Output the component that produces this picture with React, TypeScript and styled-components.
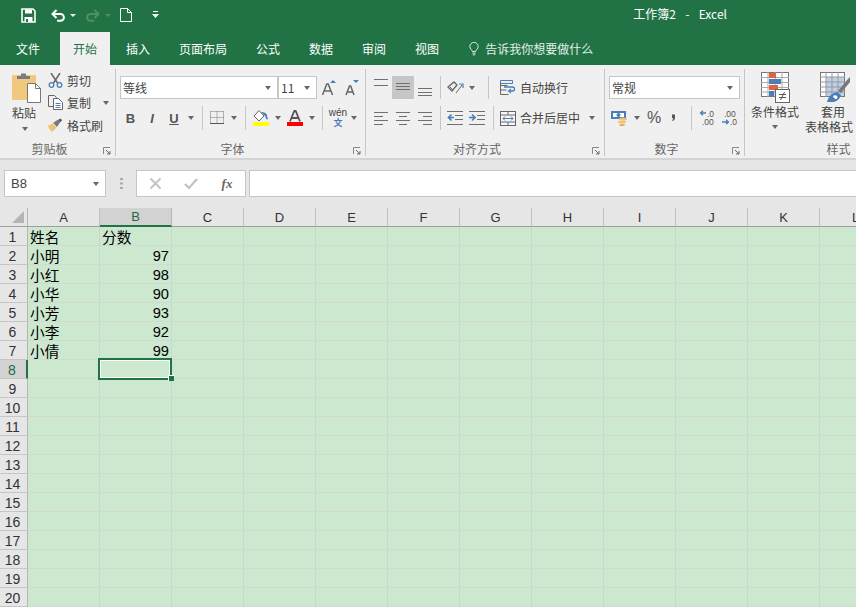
import React from 'react';
import styled, { createGlobalStyle } from 'styled-components';

const GREEN = '#217346';
const BLUE = '#4a7ebb';

const GlobalStyle = createGlobalStyle`
  html, body { margin: 0; padding: 0; background: #cce8cf; }
  body {
    width: 856px;
    height: 607px;
    overflow: hidden;
    font-family: "Noto Sans CJK SC", "Liberation Sans", sans-serif;
  }
`;

const Page = styled.div`
  width: 856px;
  height: 607px;
  display: flex;
  flex-direction: column;
  overflow: hidden;
`;

/* title bar */
const TitleBar = styled.div`
  height: 32px;
  background: ${GREEN};
  display: flex;
  align-items: center;
  color: #fff;
  flex: none;
`;
const Qat = styled.div`
  display: flex;
  align-items: center;
  padding: 0 0 2px 20px;
  height: 32px;
  box-sizing: border-box;
`;
const QatSlot = styled.div<{ $w: number }>`
  width: ${(p) => p.$w}px;
  display: flex;
  align-items: center;
  justify-content: center;
`;
const QatCaret = styled.span<{ $dim?: boolean }>`
  display: block;
  border-left: 3px solid transparent;
  border-right: 3px solid transparent;
  border-top: 3px solid ${(p) => (p.$dim ? '#4f9068' : '#e8f0ea')};
`;
const Title = styled.div`
  margin-left: auto;
  padding: 0 129px 6px 0;
  font-size: 12px;
  white-space: pre;
  word-spacing: 2px;
`;

/* tabs */
const TabBar = styled.div`
  height: 33px;
  background: ${GREEN};
  display: flex;
  padding-left: 3px;
  gap: 3px;
  flex: none;
`;
const Tab = styled.div<{ $active?: boolean; $first?: boolean }>`
  padding: 0 13px;
  display: flex;
  align-items: center;
  font-size: 12px;
  margin-right: ${(p) => (p.$first ? '4px' : '0')};
  color: ${(p) => (p.$active ? GREEN : '#fff')};
  background: ${(p) => (p.$active ? '#f0f0f0' : 'transparent')};
`;
const TellMe = styled.div`
  display: flex;
  align-items: center;
  margin-left: 14px;
  gap: 6px;
  color: #e4efe8;
  font-size: 12px;
`;

/* ribbon */
const Ribbon = styled.div`
  height: 95px;
  box-sizing: border-box;
  background: #f0f0f0;
  border-bottom: 2px solid #d4d4d4;
  display: flex;
  overflow: hidden;
  flex: none;
  color: #444;
  font-size: 12px;
`;
const Group = styled.section<{ $w: number }>`
  width: ${(p) => p.$w}px;
  flex: none;
  box-sizing: border-box;
  margin: 4px 0 2px;
  padding-top: 7px;
  border-right: 1px solid #c6c6c6;
  display: flex;
  flex-direction: column;
`;
const GroupBody = styled.div`
  flex: 1;
  display: flex;
  min-height: 0;
`;
const Stack = styled.div`
  display: flex;
  flex-direction: column;
  gap: 7px;
  padding-left: 4px;
`;
const GroupLabel = styled.div`
  height: 15px;
  display: flex;
  align-items: center;
  color: #666;
  font-size: 12px;
  line-height: 15px;
  span { flex: 1; text-align: center; }
`;
const Launcher = styled.div`
  width: 16px;
  padding-top: 4px;
  display: flex;
  align-items: center;
  justify-content: center;
`;
const Row = styled.div<{ $h?: number }>`
  display: flex;
  align-items: center;
  height: ${(p) => p.$h ?? 23}px;
`;
const Slot = styled.div<{ $w: number; $on?: boolean }>`
  width: ${(p) => p.$w}px;
  height: 100%;
  flex: none;
  display: flex;
  align-items: center;
  justify-content: center;
  background: ${(p) => (p.$on ? '#c6c6c6' : 'transparent')};
`;
const Sep = styled.div<{ $w: number }>`
  width: ${(p) => p.$w}px;
  height: 100%;
  flex: none;
  display: flex;
  justify-content: center;
  &::after {
    content: '';
    width: 1px;
    background: #c6c6c6;
    height: 100%;
  }
`;
const Caret = styled.span`
  display: block;
  border-left: 3.5px solid transparent;
  border-right: 3.5px solid transparent;
  border-top: 4px solid #666;
`;
const Select = styled.div<{ $w: number }>`
  width: ${(p) => p.$w}px;
  height: 23px;
  box-sizing: border-box;
  background: #fff;
  border: 1px solid #c6c6c6;
  display: flex;
  align-items: center;
  justify-content: space-between;
  padding: 0 6px 0 2px;
  font-size: 12px;
  color: #444;
  flex: none;
`;
const RowText = styled.span`
  margin-left: 2px;
  white-space: nowrap;
  line-height: 1;
`;
const Clipboard = styled.div`
  display: flex;
  padding-left: 12px;
`;
const PasteBtn = styled.div`
  width: 29px;
  display: flex;
  flex-direction: column;
  align-items: flex-start;
  margin-top: -4px;
  span { margin-top: 2px; line-height: 16px; }
  i { display: block; margin: 4px 0 0 10px; }
`;
const ClipRows = styled.div`
  margin: -7px 0 0 7px;
  display: flex;
  flex-direction: column;
  gap: 0.5px;
`;
const ClipRow = styled.div`
  height: 22px;
  display: flex;
  align-items: center;
  gap: 4px;
  white-space: nowrap;
`;
const ClipIcon = styled.div`
  width: 15px;
  display: flex;
  justify-content: center;
`;
const BigBtn = styled.div<{ $w: number }>`
  width: ${(p) => p.$w}px;
  flex: none;
  display: flex;
  flex-direction: column;
  align-items: center;
  margin-top: -4px;
  line-height: 15px;
  white-space: nowrap;
  svg { margin-bottom: 1px; }
  i { display: block; margin-top: 6px; }
`;
const TableBtn = styled(BigBtn)`
  align-items: flex-start;
  svg { margin-left: 15px; margin-bottom: 1px; }
  span:first-of-type { margin-left: 16px; }
`;

/* formula bar */
const FormulaBar = styled.div`
  height: 48px;
  flex: none;
  box-sizing: border-box;
  background: #e6e6e6;
  padding: 10px 0 11px 4px;
  display: flex;
  align-items: stretch;
`;
const WhiteBox = styled.div`
  background: #fff;
  border: 1px solid #c6c6c6;
  box-sizing: border-box;
  display: flex;
  align-items: center;
`;
const NameBox = styled(WhiteBox)`
  width: 102px;
  padding: 0 6px;
  justify-content: space-between;
  font: 13px "Liberation Sans", sans-serif;
  color: #444;
`;
const Dots = styled.div`
  width: 30px;
  display: flex;
  align-items: center;
  justify-content: center;
`;
const FuncBox = styled(WhiteBox)`
  width: 110px;
`;
const FuncSlot = styled.div`
  width: 36px;
  display: flex;
  justify-content: center;
  align-items: center;
`;
const Fx = styled.span`
  font: italic bold 13px "Liberation Serif", serif;
  color: #666;
`;
const FormulaInput = styled(WhiteBox)`
  margin-left: 3px;
  flex: 1;
  border-right: none;
`;

/* sheet */
const Sheet = styled.div`
  flex: 1;
  display: flex;
  flex-direction: column;
  min-height: 0;
  background: #cce8cf;
`;
const HeaderRow = styled.div`
  height: 19px;
  flex: none;
  display: flex;
  background: #e6e6e6;
`;
const Corner = styled.div`
  width: 28px;
  box-sizing: border-box;
  flex: none;
  border-right: 1px solid #b5b5b5;
  border-bottom: 1px solid #9e9e9e;
  display: flex;
  align-items: flex-end;
  justify-content: flex-end;
  padding: 0 3px 3px 0;
`;
const ColHead = styled.div<{ $sel?: boolean }>`
  width: 72px;
  flex: none;
  box-sizing: border-box;
  display: flex;
  align-items: center;
  justify-content: center;
  font: 13px "Liberation Sans", sans-serif;
  color: ${(p) => (p.$sel ? '#1c6a3f' : '#333')};
  background: ${(p) => (p.$sel ? '#d2d2d2' : 'transparent')};
  border-right: 1px solid ${(p) => (p.$sel ? '#b5b5b5' : '#c2c2c2')};
  border-bottom: ${(p) => (p.$sel ? `2px solid ${GREEN}` : '1px solid #9e9e9e')};
`;
const SheetRow = styled.div`
  height: 19px;
  flex: none;
  display: flex;
`;
const RowHead = styled.div<{ $sel?: boolean }>`
  width: 28px;
  flex: none;
  box-sizing: border-box;
  display: flex;
  align-items: center;
  justify-content: center;
  padding: 1px 2px 0 0;
  font: 14px "Liberation Sans", sans-serif;
  color: ${(p) => (p.$sel ? '#1c6a3f' : '#333')};
  background: ${(p) => (p.$sel ? '#d2d2d2' : '#e6e6e6')};
  border-right: ${(p) => (p.$sel ? `2px solid ${GREEN}` : '1px solid #b5b5b5')};
  border-bottom: 1px solid #c6c6c6;
`;
const Cell = styled.div<{ $num?: boolean }>`
  width: 72px;
  flex: none;
  box-sizing: border-box;
  position: relative;
  padding: ${(p) => (p.$num ? '2px 2px 0' : '0 2px')};
  display: flex;
  align-items: center;
  justify-content: ${(p) => (p.$num ? 'flex-end' : 'flex-start')};
  font: 14.67px "Liberation Sans", "Noto Sans CJK SC", sans-serif;
  color: #000;
  border-right: 1px solid #c6dac9;
  border-bottom: 1px solid #d2d8d2;
`;
const Selection = styled.div`
  position: absolute;
  left: -2px;
  top: -2px;
  width: 74px;
  height: 22px;
  box-sizing: border-box;
  border: 2px solid ${GREEN};
  outline: 1px solid #fff;
  outline-offset: -3px;
  z-index: 2;
`;
const FillHandle = styled.div`
  position: absolute;
  right: -4px;
  bottom: -3px;
  width: 5px;
  height: 5px;
  background: ${GREEN};
  border-left: 1px solid #fff;
  border-top: 1px solid #fff;
`;

/* icons */
const SaveIcon = () => (
  <svg width="15" height="15" viewBox="0 0 15 15">
    <path d="M1 1h11l2 2v11H1z" fill="none" stroke="#fff" strokeWidth="1.6" />
    <path d="M4 1.500h7v4H4zM3.500 9h8v5h-8z" fill="#fff" />
    <path d="M5 11h2v3H5z" fill={GREEN} />
  </svg>
);
const UndoIcon = ({ color }: { color: string }) => (
  <svg width="15" height="13" viewBox="0 0 15 13">
    <path d="M2 5h7.500a3.300 3.300 0 0 1 0 6.800H6" fill="none" stroke={color} strokeWidth="2" />
    <path d="M5.500 1 1.500 5l4 4" fill="none" stroke={color} strokeWidth="2" />
  </svg>
);
const RedoIcon = ({ color }: { color: string }) => (
  <svg width="15" height="13" viewBox="0 0 15 13">
    <path d="M13 5H5.500a3.300 3.300 0 0 0 0 6.800H9" fill="none" stroke={color} strokeWidth="2" />
    <path d="M9.500 1l4 4-4 4" fill="none" stroke={color} strokeWidth="2" />
  </svg>
);
const NewDocIcon = () => (
  <svg width="12" height="14" viewBox="0 0 12 14">
    <path d="M.5.500h7l4 4v9H.5z" fill={GREEN} stroke="#fff" />
    <path d="M7.500.5v4h4" fill="none" stroke="#fff" />
  </svg>
);
const CustomizeIcon = () => (
  <svg width="7" height="8" viewBox="0 0 7 8">
    <path d="M1 0h5v1H1z" fill="#fff" />
    <path d="M0 3h7L3.500 7z" fill="#fff" />
  </svg>
);
const BulbIcon = () => (
  <svg width="10" height="14" viewBox="0 0 12 16">
    <path d="M4 11c0-2-3-3-3-6a5 5 0 0 1 10 0c0 3-3 4-3 6z" fill="none" stroke="#fff" />
    <path d="M4 13h4M4.500 15h3" stroke="#fff" />
  </svg>
);
const PasteIcon = () => (
  <svg width="29" height="31" viewBox="0 0 29 31">
    <rect x="0" y="3" width="24" height="25" rx="1" fill="#f0c87e" />
    <path d="M5 7V4h4V1.500h5V4h4v3z" fill="#7b7b7b" />
    <path d="M15.500 11.500h8l5 5v14h-13z" fill="#fff" stroke="#777" />
    <path d="M23.500 11.500v5h5" fill="none" stroke="#777" />
  </svg>
);
const ScissorsIcon = () => (
  <svg width="15" height="15" viewBox="0 0 15 15">
    <path d="M3 0l6.500 10M12 0 5.500 10" stroke="#666" strokeWidth="1.500" fill="none" />
    <circle cx="3.500" cy="12" r="2.300" fill="none" stroke={BLUE} strokeWidth="1.300" />
    <circle cx="11.500" cy="12" r="2.300" fill="none" stroke={BLUE} strokeWidth="1.300" />
  </svg>
);
const CopyIcon = () => (
  <svg width="15" height="15" viewBox="0 0 15 15">
    <path d="M.5.500h6l2 2v9h-8z" fill="#f0f0f0" stroke="#666" />
    <path d="M5.500 3.500h5l4 4v7h-9z" fill="#fff" stroke="#666" />
    <path d="M7.500 8.500h5M7.500 10.500h5M7.500 12.500h5" stroke={BLUE} />
  </svg>
);
const BrushIcon = () => (
  <svg width="16" height="14" viewBox="0 0 16 14">
    <path d="M0 8l5-3 4 5-4 4C3 14 1 11 0 8z" fill="#efc27a" />
    <path d="M5.500 4.500 11 1l2 3-3.500 5z" fill="#777" />
    <path d="M11 1.500 13.500 0 15 2l-2 2z" fill="#555" />
  </svg>
);
const LauncherIcon = () => (
  <svg width="8" height="8" viewBox="0 0 8 8">
    <path d="M.5 7V.5H7" fill="none" stroke="#888" />
    <path d="M3 3l4 4M7 4v3H4" fill="none" stroke="#666" />
  </svg>
);
const GrowIcon = ({ up }: { up: boolean }) => (
  <svg width="14" height="16" viewBox="0 0 14 16">
    <path
      d={up ? 'M.5 15 4.800 4h1.400L10.500 15M2.500 11h6' : 'M1 15 4.500 6h1.200L9 15M2.500 12h5'}
      fill="none"
      stroke="#666"
      strokeWidth="1.500"
    />
    <path d={up ? 'M8 3h6l-3-3z' : 'M8 0h6l-3 3z'} fill={BLUE} />
  </svg>
);
const LetterIcon = styled.span<{ $kind: 'b' | 'i' | 'u' }>`
  font: ${(p) => (p.$kind === 'i' ? 'italic bold' : 'bold')} 13px "Liberation Sans", sans-serif;
  color: #555;
  text-decoration: ${(p) => (p.$kind === 'u' ? 'underline' : 'none')};
`;
const BorderIcon = () => (
  <svg width="14" height="14" viewBox="0 0 14 14">
    <path
      d="M.5.500h13M.5 6.500h13M.5 .5v11M7 .5v11M13.500 .5v11"
      stroke="#777"
      strokeDasharray="1 1"
      fill="none"
    />
    <path d="M0 12.500h14" stroke="#555" />
  </svg>
);
const FillIcon = () => (
  <svg width="16" height="16" viewBox="0 0 16 16">
    <path d="M6 .5 1 6l5 5 5-5z" fill="#fff" stroke="#666" />
    <path d="M8 2c3 0 6 1 6 4l1 3c-1 1-2 0-2-1l-1-2z" fill={BLUE} />
    <rect x="0" y="12" width="16" height="4" fill="#ffff00" />
  </svg>
);
const FontColorIcon = () => (
  <svg width="16" height="16" viewBox="0 0 16 16">
    <path d="M3 11.500 7.300 1h1.400L13 11.500M5 8h6" fill="none" stroke="#555" strokeWidth="1.800" />
    <rect x="0" y="12" width="16" height="4" fill="#ff0000" />
  </svg>
);
const Wen = styled.div`
  display: flex;
  flex-direction: column;
  align-items: center;
  font: 10px/10px "Liberation Sans", sans-serif;
  color: #444;
  b { font: bold 9px/10px "Noto Sans CJK SC", sans-serif; color: ${BLUE}; }
`;
const Lines = ({ ys, x = [[0, 14]] }: { ys: number[]; x?: number[][] }) => (
  <svg width="14" height="23" viewBox="0 0 14 23">
    {ys.map((y, i) => {
      const [a, b] = x[i % x.length];
      return <path key={y} d={`M${a} ${y + 0.5}H${b}`} stroke="#6f6f6f" />;
    })}
  </svg>
);
const OrientIcon = () => (
  <svg width="17" height="15" viewBox="0 0 17 15">
    <path d="M1 7l6-5 3 3-5 6z" fill="none" stroke="#666" strokeWidth="1.300" />
    <path d="M3 7l3 3" stroke="#666" />
    <path d="M9 13l6-8" stroke="#666" />
    <path d="M12 4h4v4" fill="none" stroke={BLUE} strokeWidth="1.200" />
  </svg>
);
const IndentIcon = ({ out }: { out: boolean }) => (
  <svg width="16" height="14" viewBox="0 0 16 14">
    <path d="M0 .5h16M8 4.500h8M8 8.500h8M0 13.500h16" stroke="#6f6f6f" />
    <path
      d={out ? 'M7 6.500H2M4.500 3.500l-3 3 3 3' : 'M0 6.500h5M3 3.500l3 3-3 3'}
      fill="none"
      stroke={BLUE}
      strokeWidth="1.700"
    />
  </svg>
);
const WrapIcon = () => (
  <svg width="16" height="15" viewBox="0 0 16 15">
    <path d="M.5 3v11.500h8M.5 5.500h7M.5 10h6" fill="none" stroke="#666" />
    <path d="M.5.500h12v3h-12z" fill="none" stroke={BLUE} />
    <path d="M4 7h8.500a2 2 0 0 1 0 4H9" fill="none" stroke={BLUE} strokeWidth="1.300" />
    <path d="M11 9l-2.500 2 2.500 2" fill="none" stroke={BLUE} strokeWidth="1.200" />
  </svg>
);
const MergeIcon = () => (
  <svg width="16" height="15" viewBox="0 0 16 15">
    <rect x=".5" y=".5" width="15" height="14" fill="#f8f8f8" stroke="#666" />
    <path d="M0 4h16M0 11h16M8 0v4M8 11v4" stroke="#666" />
    <path d="M3 7.500h10M5 5.500l-2 2 2 2M11 5.500l2 2-2 2" fill="none" stroke={BLUE} />
  </svg>
);
const MoneyIcon = () => (
  <svg width="18" height="16" viewBox="0 0 18 16">
    <rect x="0" y="1" width="15" height="8" fill={BLUE} />
    <rect x="2" y="3" width="11" height="4" fill="#fff" />
    <circle cx="7.500" cy="5" r="2" fill={BLUE} />
    <ellipse cx="12" cy="9" rx="4" ry="1.500" fill="#efc27a" />
    <ellipse cx="11" cy="12" rx="4" ry="1.500" fill="#efc27a" />
    <ellipse cx="11" cy="15" rx="3" ry="1" fill="#e3a74f" />
  </svg>
);
const Percent = styled.span`
  font: 16px "Liberation Sans", sans-serif;
  color: #555;
`;
const CommaIcon = () => (
  <svg width="18" height="10" viewBox="0 0 18 10">
    <path d="M7 1.500h3v3c0 2-1 3-2.500 3.500L7 7c1 0 1-1 1-2H7z" fill="#555" />
  </svg>
);
const DecimalText = styled.text`
  font: 8.500px "Liberation Sans", sans-serif;
  fill: #555;
`;
const DecimalIcon = ({ inc }: { inc: boolean }) => (
  <svg width="17" height="16" viewBox="0 0 17 16">
    {inc ? (
      <>
        <DecimalText x="8" y="6.500">.0</DecimalText>
        <DecimalText x="3" y="15">.00</DecimalText>
        <path d="M7 3H1.500M4 .8 1.500 3 4 5.200" fill="none" stroke={BLUE} strokeWidth="1.300" />
      </>
    ) : (
      <>
        <DecimalText x="3" y="6.500">.00</DecimalText>
        <DecimalText x="9" y="15">.0</DecimalText>
        <path d="M1 12h6M5 9.800 7.500 12 5 14.200" fill="none" stroke={BLUE} strokeWidth="1.300" />
      </>
    )}
  </svg>
);
const CondFormatIcon = () => (
  <svg width="29" height="31" viewBox="0 0 29 31">
    <rect x=".5" y=".5" width="27" height="24" fill="#fff" stroke="#777" />
    <path d="M7 0v25M14 0v25M21 0v25M0 5.500h28M0 10.500h28M0 15.500h28M0 20h28" stroke="#aaa" />
    <rect x="8" y="1" width="7" height="5" fill="#e1653c" />
    <rect x="8" y="7" width="12" height="5" fill={BLUE} />
    <rect x="8" y="13" width="9" height="5" fill="#e1653c" />
    <rect x="8" y="19" width="5" height="5" fill={BLUE} />
    <rect x="14.500" y="17.500" width="14" height="13" fill="#fff" stroke="#666" />
    <path d="M18 22.500h7M18 25.500h7M19.500 28l4-8" stroke="#555" />
  </svg>
);
const TableStyleIcon = () => (
  <svg width="30" height="31" viewBox="0 0 30 31">
    <rect x=".5" y=".5" width="24" height="24" fill="#fff" stroke="#777" />
    <rect x="6" y="5" width="18" height="19" fill="#bcd0e6" />
    <path d="M6 0v25M12 0v25M18 0v25M0 5h25M0 10h25M0 15h25M0 20h25" stroke="#999" />
    <path d="M18 19l9-11 3-3v5l-9 11z" fill="#777" />
    <path d="M7 30c1-5 5-9 10-10l4 3c-1 4-5 7-8 7z" fill={BLUE} />
    <path d="M13 24c1-1 3-1 4 0s0 3-1 3-3-2-3-3z" fill="#fff" />
  </svg>
);
const CornerTriangle = () => (
  <svg width="12" height="12" viewBox="0 0 12 12">
    <path d="M12 0v12H0z" fill="#b4b4b4" />
  </svg>
);
const DotsIcon = () => (
  <svg width="3" height="11" viewBox="0 0 3 11">
    <path d="M0 0h3v2H0zM0 4.500h3v2H0zM0 9h3v2H0z" fill="#aaa" />
  </svg>
);
const CrossIcon = () => (
  <svg width="13" height="13" viewBox="0 0 13 13">
    <path d="M1.500 1.500l10 10M11.500 1.500l-10 10" stroke="#c2c2c2" strokeWidth="1.800" />
  </svg>
);
const CheckIcon = () => (
  <svg width="14" height="12" viewBox="0 0 14 12">
    <path d="M1 6l4 4 8-9" fill="none" stroke="#c2c2c2" strokeWidth="2.200" />
  </svg>
);

const tabs = ['插入', '页面布局', '公式', '数据', '审阅', '视图'];
const columns = ['A', 'B', 'C', 'D', 'E', 'F', 'G', 'H', 'I', 'J', 'K', 'L'];
const scores: [string, string][] = [
  ['姓名', '分数'],
  ['小明', '97'],
  ['小红', '98'],
  ['小华', '90'],
  ['小芳', '93'],
  ['小李', '92'],
  ['小倩', '99'],
];
const rowNumbers = Array.from({ length: 20 }, (_, i) => i + 1);

const App: React.FC = () => (
  <Page>
    <GlobalStyle />
    <TitleBar>
      <Qat>
        <QatSlot $w={16}><SaveIcon /></QatSlot>
        <QatSlot $w={14} />
        <QatSlot $w={16}><UndoIcon color="#fff" /></QatSlot>
        <QatSlot $w={13}><QatCaret /></QatSlot>
        <QatSlot $w={5} />
        <QatSlot $w={16}><RedoIcon color="#4f9068" /></QatSlot>
        <QatSlot $w={15}><QatCaret $dim /></QatSlot>
        <QatSlot $w={5} />
        <QatSlot $w={12}><NewDocIcon /></QatSlot>
        <QatSlot $w={19} />
        <QatSlot $w={8}><CustomizeIcon /></QatSlot>
      </Qat>
      <Title>工作簿2  -  Excel</Title>
    </TitleBar>

    <TabBar>
      <Tab $first>文件</Tab>
      <Tab $active>开始</Tab>
      {tabs.map((t) => (
        <Tab key={t}>{t}</Tab>
      ))}
      <TellMe>
        <BulbIcon />
        告诉我你想要做什么
      </TellMe>
    </TabBar>

    <Ribbon>
      <Group $w={116}>
        <GroupBody>
          <Clipboard>
            <PasteBtn>
              <PasteIcon />
              <span>粘贴</span>
              <i><Caret /></i>
            </PasteBtn>
            <ClipRows>
              <ClipRow><ClipIcon><ScissorsIcon /></ClipIcon>剪切</ClipRow>
              <ClipRow><ClipIcon><CopyIcon /></ClipIcon>复制<Slot $w={22}><Caret /></Slot></ClipRow>
              <ClipRow><ClipIcon><BrushIcon /></ClipIcon>格式刷</ClipRow>
            </ClipRows>
          </Clipboard>
        </GroupBody>
        <GroupLabel><span>剪贴板</span><Launcher><LauncherIcon /></Launcher></GroupLabel>
      </Group>

      <Group $w={250}>
        <GroupBody>
          <Stack>
            <Row>
              <Select $w={158}>等线<Caret /></Select>
              <Select $w={39}>11<Caret /></Select>
              <Slot $w={24}><GrowIcon up /></Slot>
              <Slot $w={22}><GrowIcon up={false} /></Slot>
            </Row>
            <Row $h={24}>
              <Slot $w={21}><LetterIcon $kind="b">B</LetterIcon></Slot>
              <Slot $w={22}><LetterIcon $kind="i">I</LetterIcon></Slot>
              <Slot $w={22}><LetterIcon $kind="u">U</LetterIcon></Slot>
              <Slot $w={12}><Caret /></Slot>
              <Sep $w={10} />
              <Slot $w={20}><BorderIcon /></Slot>
              <Slot $w={13}><Caret /></Slot>
              <Sep $w={10} />
              <Slot $w={22}><FillIcon /></Slot>
              <Slot $w={12}><Caret /></Slot>
              <Slot $w={22}><FontColorIcon /></Slot>
              <Slot $w={12}><Caret /></Slot>
              <Sep $w={8} />
              <Slot $w={24}><Wen>wén<b>文</b></Wen></Slot>
              <Slot $w={8}><Caret /></Slot>
            </Row>
          </Stack>
        </GroupBody>
        <GroupLabel><span>字体</span><Launcher><LauncherIcon /></Launcher></GroupLabel>
      </Group>

      <Group $w={239}>
        <GroupBody>
          <Stack>
            <Row>
              <Slot $w={22}><Lines ys={[3, 9]} /></Slot>
              <Slot $w={22} $on><Lines ys={[7, 10, 13]} /></Slot>
              <Slot $w={22}><Lines ys={[12, 16, 19]} /></Slot>
              <Sep $w={8} />
              <Slot $w={22}><OrientIcon /></Slot>
              <Slot $w={12}><Caret /></Slot>
              <Sep $w={20} />
              <Slot $w={20}><WrapIcon /></Slot>
              <RowText>自动换行</RowText>
            </Row>
            <Row $h={24}>
              <Slot $w={22}><Lines ys={[5, 9, 13, 17]} x={[[0, 14], [0, 9]]} /></Slot>
              <Slot $w={22}><Lines ys={[5, 9, 13, 17]} x={[[0, 14], [3, 11]]} /></Slot>
              <Slot $w={22}><Lines ys={[5, 9, 13, 17]} x={[[0, 14], [5, 14]]} /></Slot>
              <Sep $w={8} />
              <Slot $w={22}><IndentIcon out /></Slot>
              <Slot $w={22}><IndentIcon out={false} /></Slot>
              <Sep $w={10} />
              <Slot $w={20}><MergeIcon /></Slot>
              <RowText>合并后居中</RowText>
              <Slot $w={24}><Caret /></Slot>
            </Row>
          </Stack>
        </GroupBody>
        <GroupLabel><span>对齐方式</span><Launcher><LauncherIcon /></Launcher></GroupLabel>
      </Group>

      <Group $w={140}>
        <GroupBody>
          <Stack>
            <Row>
              <Select $w={131}>常规<Caret /></Select>
            </Row>
            <Row $h={24}>
              <Slot $w={22}><MoneyIcon /></Slot>
              <Slot $w={12}><Caret /></Slot>
              <Slot $w={22}><Percent>%</Percent></Slot>
              <Slot $w={18}><CommaIcon /></Slot>
              <Sep $w={16} />
              <Slot $w={17}><DecimalIcon inc /></Slot>
              <Slot $w={5} />
              <Slot $w={17}><DecimalIcon inc={false} /></Slot>
            </Row>
          </Stack>
        </GroupBody>
        <GroupLabel><span>数字</span><Launcher><LauncherIcon /></Launcher></GroupLabel>
      </Group>

      <Group $w={188}>
        <GroupBody>
          <BigBtn $w={60}>
            <CondFormatIcon />
            <span>条件格式</span>
            <i><Caret /></i>
          </BigBtn>
          <TableBtn $w={56}>
            <TableStyleIcon />
            <span>套用</span>
            <span>表格格式</span>
          </TableBtn>
        </GroupBody>
        <GroupLabel><span>样式</span></GroupLabel>
      </Group>
    </Ribbon>

    <FormulaBar>
      <NameBox>B8<Caret /></NameBox>
      <Dots><DotsIcon /></Dots>
      <FuncBox>
        <FuncSlot><CrossIcon /></FuncSlot>
        <FuncSlot><CheckIcon /></FuncSlot>
        <FuncSlot><Fx>fx</Fx></FuncSlot>
      </FuncBox>
      <FormulaInput />
    </FormulaBar>

    <Sheet>
      <HeaderRow>
        <Corner><CornerTriangle /></Corner>
        {columns.map((c) => (
          <ColHead key={c} $sel={c === 'B'}>{c}</ColHead>
        ))}
      </HeaderRow>
      {rowNumbers.map((n) => (
        <SheetRow key={n}>
          <RowHead $sel={n === 8}>{n}</RowHead>
          {columns.map((c, i) => {
            const value = i < 2 ? scores[n - 1]?.[i] : undefined;
            return (
              <Cell key={c} $num={value !== undefined && /^\d+$/.test(value)}>
                {value}
                {n === 8 && c === 'B' && (
                  <Selection>
                    <FillHandle />
                  </Selection>
                )}
              </Cell>
            );
          })}
        </SheetRow>
      ))}
    </Sheet>
  </Page>
);

export default App;
